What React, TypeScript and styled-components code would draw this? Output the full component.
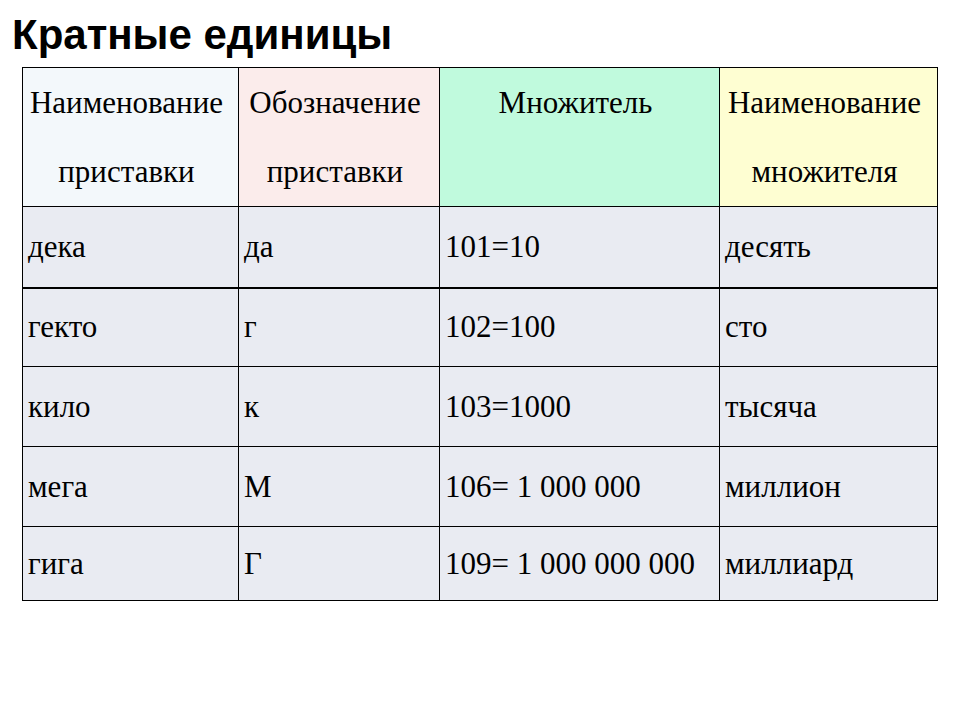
import React from 'react';
import styled, { createGlobalStyle } from 'styled-components';

const GlobalStyle = createGlobalStyle`
  html, body {
    margin: 0;
    padding: 0;
    background: #ffffff;
  }
`;

const Page = styled.div`
  width: 960px;
  height: 720px;
  padding: 13px 0 0 12px;
  box-sizing: border-box;
`;

const Title = styled.h1`
  margin: 0 0 11px 0;
  font-family: "Liberation Sans", Arial, sans-serif;
  font-weight: bold;
  font-size: 42px;
  line-height: 43px;
  color: #000000;
`;

const Table = styled.table`
  margin-left: 10px;
  border-collapse: collapse;
  table-layout: fixed;
  width: 915px;
  font-family: "Liberation Serif", "Times New Roman", serif;
  font-size: 31px;
  color: #000000;
`;

const HeadCell = styled.th<{ $bg: string }>`
  background: ${(p) => p.$bg};
  border: 1px solid #000000;
  font-weight: normal;
  text-align: center;
  vertical-align: top;
  padding: 0 8px 0 0;
  height: 137px;
  line-height: 69px;
  white-space: nowrap;
`;

const Cell = styled.td<{ $thick?: boolean }>`
  background: #e9ebf2;
  border: 1px solid #000000;
  border-bottom-width: ${(p) => (p.$thick ? '2px' : '1px')};
  padding: 0 0 0 5px;
  text-align: left;
  vertical-align: middle;
  white-space: nowrap;
`;

const Row = styled.tr<{ $h: number }>`
  height: ${(p) => p.$h}px;
`;

const rows = [
  { name: 'дека', sym: 'да', mult: '101=10', word: 'десять', h: 81 },
  { name: 'гекто', sym: 'г', mult: '102=100', word: 'сто', h: 79 },
  { name: 'кило', sym: 'к', mult: '103=1000', word: 'тысяча', h: 80 },
  { name: 'мега', sym: 'М', mult: '106= 1 000 000', word: 'миллион', h: 80 },
  { name: 'гига', sym: 'Г', mult: '109= 1 000 000 000', word: 'миллиард', h: 74 },
];

export default function App() {
  return (
    <Page>
      <GlobalStyle />
      <Title>Кратные единицы</Title>
      <Table>
        <colgroup>
          <col style={{ width: 216 }} />
          <col style={{ width: 201 }} />
          <col style={{ width: 280 }} />
          <col style={{ width: 218 }} />
        </colgroup>
        <thead>
          <tr>
            <HeadCell $bg="#f3f8fb">Наименование<br />приставки</HeadCell>
            <HeadCell $bg="#fbeceb">Обозначение<br />приставки</HeadCell>
            <HeadCell $bg="#c0fadd">Множитель</HeadCell>
            <HeadCell $bg="#fefed2">Наименование<br />множителя</HeadCell>
          </tr>
        </thead>
        <tbody>
          {rows.map((r, i) => (
            <Row key={r.name} $h={r.h}>
              <Cell $thick={i === 0}>{r.name}</Cell>
              <Cell $thick={i === 0}>{r.sym}</Cell>
              <Cell $thick={i === 0}>{r.mult}</Cell>
              <Cell $thick={i === 0}>{r.word}</Cell>
            </Row>
          ))}
        </tbody>
      </Table>
    </Page>
  );
}
